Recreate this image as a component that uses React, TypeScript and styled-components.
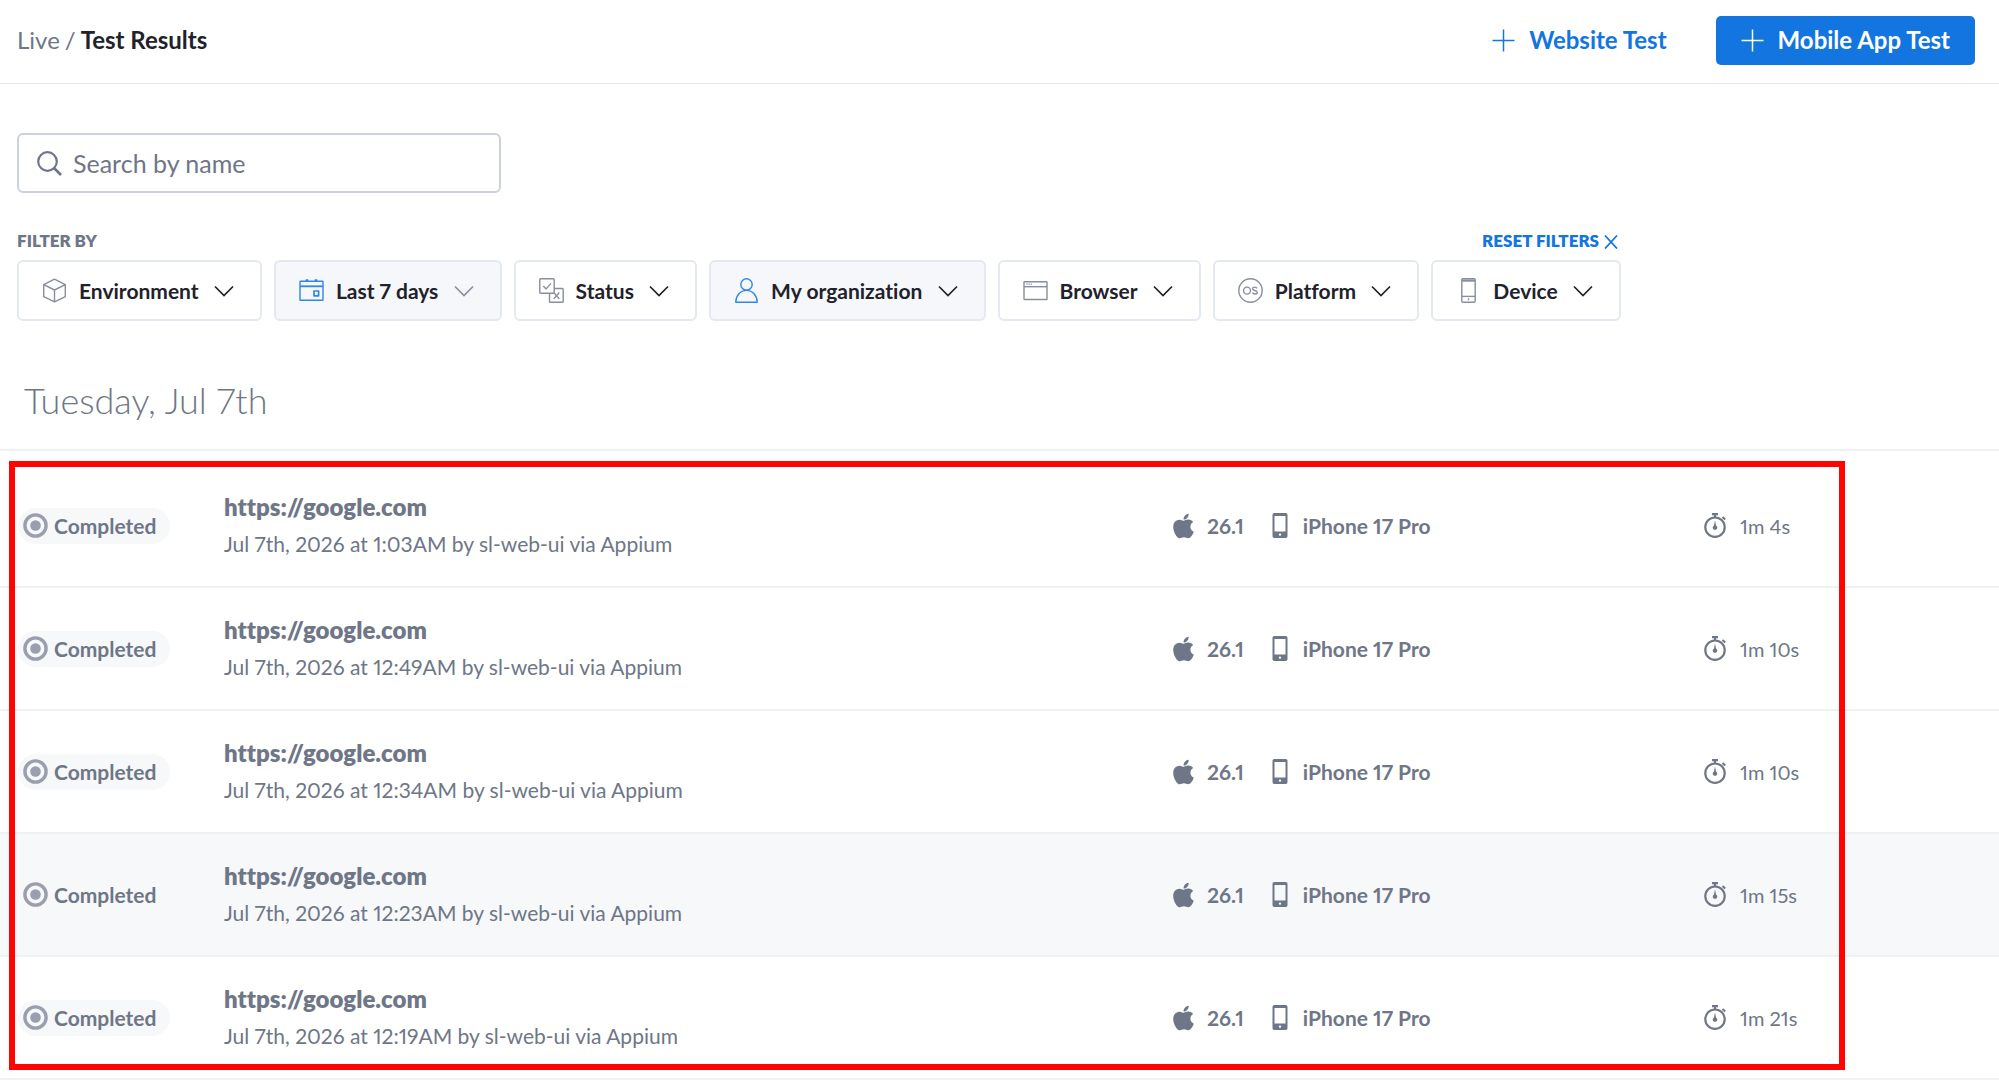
import React from "react";
import styled, { createGlobalStyle } from "styled-components";
import { FaApple } from "react-icons/fa";

const ink = "#1f222b";
const slate = "#6e7687";
const blue = "#1275e0";
const line = "#e4e8f1";

const GlobalStyle = createGlobalStyle`
  *, *::before, *::after { box-sizing: border-box; }
  body {
    margin: 0;
    background: #fff;
    color: ${slate};
    font-family: Lato, "Open Sans", sans-serif;
    font-size: 21px;
    font-variant-ligatures: none;
    font-variant-numeric: proportional-nums;
    line-height: 28px;
  }
  button, input { font: inherit; font-variant-ligatures: none; }
  a { color: inherit; text-decoration: none; }
  svg { display: block; flex: none; }
`;

const Header = styled.header`
  display: flex;
  align-items: center;
  justify-content: space-between;
  height: 84px;
  padding: 0 24px 3px 17px;
  border-bottom: 1px solid ${line};
`;

const Breadcrumb = styled.nav`
  display: flex;
  gap: 5px;
  font-size: 24px;
  line-height: 32px;
`;

const Current = styled.h1`
  margin: 0;
  color: ${ink};
  font-size: 24px;
  font-weight: 700;
  line-height: 32px;
`;

const Actions = styled.div`
  display: flex;
  gap: 24px;
`;

const ActionButton = styled.button<{ $primary?: boolean }>`
  display: flex;
  align-items: center;
  gap: 14px;
  height: 49px;
  padding: 0 25px;
  border: 0;
  border-radius: 5px;
  background: ${(p) => (p.$primary ? blue : "transparent")};
  color: ${(p) => (p.$primary ? "#fff" : blue)};
  font-size: 24px;
  font-weight: 700;
  line-height: 32px;
`;

const Toolbar = styled.section`
  padding: 49px 17px 0;
`;

const SearchBox = styled.label`
  display: flex;
  align-items: center;
  gap: 11px;
  width: 484px;
  max-width: 100%;
  height: 60px;
  padding: 0 18px;
  border: 2px solid #cbd1de;
  border-radius: 6px;
`;

const SearchInput = styled.input`
  flex: 1;
  min-width: 0;
  padding: 0;
  border: 0;
  outline: 0;
  background: none;
  color: ${ink};
  font-size: 25px;
  line-height: 32px;
  &::placeholder { color: ${slate}; opacity: 1; }
`;

const Filters = styled.div`
  max-width: 1604px;
  margin-top: 36px;
`;

const FiltersHead = styled.div`
  display: flex;
  align-items: center;
  justify-content: space-between;
  height: 24px;
  margin-bottom: 7px;
  font-size: 17px;
  font-weight: 800;
  line-height: 24px;
`;

const ResetButton = styled.button`
  display: flex;
  align-items: center;
  gap: 5px;
  padding: 0 3px 0 0;
  border: 0;
  background: none;
  color: ${blue};
  font-weight: 800;
`;

const FilterRow = styled.div`
  display: flex;
  gap: 12px;
`;

const FilterButton = styled.button<{ $active?: boolean }>`
  display: flex;
  flex: 1 1 auto;
  align-items: center;
  gap: 12px;
  height: 61px;
  padding: 0 26px 0 23px;
  border: 2px solid ${line};
  border-radius: 6px;
  background: ${(p) => (p.$active ? "#f6f7fa" : "#fff")};
  color: ${ink};
  font-weight: 700;
  white-space: nowrap;
  & > svg:first-child { color: ${(p) => (p.$active ? "#2d86ee" : "#878e9e")}; }
  & > svg:last-child { margin-left: auto; }
`;

const DayHeading = styled.h2`
  margin: 0;
  padding: 54px 24px 24px;
  color: ${slate};
  font-size: 36px;
  font-weight: 300;
  line-height: 50px;
`;

const Results = styled.div`
  position: relative;
  padding-top: 14px;
  border-top: 2px solid #f0f1f3;
`;

const Highlight = styled.div`
  position: absolute;
  top: 10px;
  bottom: 10px;
  left: 9px;
  right: 154px;
  border: 6px solid #ff0400;
  pointer-events: none;
`;

const RowList = styled.ul`
  margin: 0;
  padding: 0;
  list-style: none;
`;

const Row = styled.li<{ $hovered?: boolean }>`
  display: grid;
  grid-template-columns: 206px 949fr 531fr 295fr;
  align-items: center;
  height: 123px;
  padding-left: 18px;
  border-bottom: 2px solid #f0f1f3;
  background: ${(p) => (p.$hovered ? "#f7f8fa" : "transparent")};
`;

const StatusPill = styled.span`
  display: flex;
  align-items: center;
  justify-self: start;
  gap: 6px;
  height: 36px;
  padding: 0 14px 0 5px;
  border-radius: 18px;
  background: #f7f8fa;
  font-weight: 700;
`;

const TestInfo = styled.div`
  padding-bottom: 2px;
`;

const TestName = styled.a`
  display: block;
  margin-bottom: 7px;
  font-size: 24px;
  font-weight: 800;
  line-height: 32px;
`;

const TestMeta = styled.p`
  margin: 0;
`;

const Specs = styled.div`
  display: flex;
  align-items: center;
  gap: 26px;
  font-weight: 700;
`;

const Spec = styled.span`
  display: flex;
  align-items: center;
  gap: 13px;
`;

const Duration = styled(Spec)`
  font-size: 20px;
`;

const AppleIcon = styled(FaApple)`
  width: 21px;
  height: 28px;
`;

const PlusIcon = () => (
  <svg width="23" height="23" viewBox="0 0 23 23" fill="none" stroke="currentColor" strokeWidth="1.5" aria-hidden>
    <path d="M11.5 0.5v22M0.5 11.5h22" />
  </svg>
);

const SearchIcon = () => (
  <svg width="25" height="25" viewBox="0 0 25 25" fill="none" stroke={slate} strokeWidth="2.2" aria-hidden>
    <circle cx="10.5" cy="10.5" r="9.3" />
    <path d="M17 17l7 7" strokeWidth="2.6" />
  </svg>
);

const CloseIcon = () => (
  <svg width="14" height="16" viewBox="0 0 14 16" fill="none" stroke="currentColor" strokeWidth="1.8" aria-hidden>
    <path d="M1 2.5l12 13M13 2.5l-12 13" />
  </svg>
);

const ChevronIcon = ({ muted }: { muted?: boolean }) => (
  <svg width="20" height="12" viewBox="0 0 20 12" fill="none" stroke={muted ? "#878e9e" : ink} strokeWidth="1.7" aria-hidden>
    <path d="M1 1.500l9 9 9-9" />
  </svg>
);

const FilterIcon = ({ children }: { children: React.ReactNode }) => (
  <svg width="25" height="25" viewBox="0 0 25 25" fill="none" stroke="currentColor" strokeWidth="1.4" strokeLinejoin="round" aria-hidden>
    {children}
  </svg>
);

const icons = {
  cube: (
    <FilterIcon>
      <path d="M12.5 1.2l10.8 5.4v12l-10.8 5.2-10.8-5.2v-12zM1.7 6.6l10.8 5.4 10.8-5.4M12.5 12v11.8" />
    </FilterIcon>
  ),
  calendar: (
    <FilterIcon>
      <rect x="1" y="3.3" width="23" height="19" rx="0.5" />
      <path d="M1 8.3h23" strokeWidth="1.8" />
      <path d="M8 1.2v2.4M17 1.2v2.4" strokeWidth="2.6" />
      <rect x="15" y="13" width="4.6" height="4.8" strokeWidth="1.7" />
    </FilterIcon>
  ),
  checks: (
    <FilterIcon>
      <rect x="0.8" y="0.8" width="14.4" height="14.4" rx="0.8" />
      <path d="M15.2 10.5h8.2a.8.8 0 0 1 .8.8v12.1a.8.8 0 0 1-.8.8H11.3a.8.8 0 0 1-.8-.8v-8.2" />
      <path d="M4.3 8.1l2.8 2.8 4.9-5.5M14.7 14.5l5.6 6.4M20.3 14.5l-5.6 6.4" />
    </FilterIcon>
  ),
  person: (
    <FilterIcon>
      <circle cx="12.5" cy="6.5" r="5.7" />
      <path d="M1.8 24.2c0-6.6 4.8-11.8 10.7-11.8s10.7 5.2 10.7 11.8z" />
    </FilterIcon>
  ),
  window: (
    <FilterIcon>
      <rect x="1" y="3.7" width="23" height="17.8" rx="0.5" />
      <path d="M1 8.700h23" />
      <path d="M3.400 6.200h6" strokeWidth="1.300" strokeDasharray="1.300 0.800" />
    </FilterIcon>
  ),
  os: (
    <FilterIcon>
      <circle cx="12.5" cy="12.5" r="11.7" />
      <circle cx="9" cy="12.6" r="3.5" />
      <path d="M19 10.400c-.5-.9-1.300-1.300-2.300-1.300-1.200 0-2.100.6-2.100 1.600 0 2.300 4.600 1.200 4.600 3.500 0 1-1 1.800-2.200 1.800-1.200 0-2.100-.5-2.600-1.400" />
    </FilterIcon>
  ),
  phone: (
    <FilterIcon>
      <rect x="5.8" y="0.8" width="13.4" height="23.4" rx="1" />
      <path d="M5.8 2.6h13.4" strokeWidth="2.2" />
      <path d="M5.8 18.4h13.4" />
      <path d="M12.5 20.3v2" />
    </FilterIcon>
  ),
};

const CompletedIcon = () => (
  <svg width="25" height="25" viewBox="0 0 25 25" fill="none" aria-hidden>
    <circle cx="12.5" cy="12.5" r="10.6" stroke="#999fae" strokeWidth="3.4" />
    <circle cx="12.5" cy="12.5" r="5.3" fill="#999fae" />
  </svg>
);

const PhoneIcon = () => (
  <svg width="20" height="25" viewBox="0 0 20 25" aria-hidden>
    <path
      fill={slate}
      fillRule="evenodd"
      d="M4.2 0h11.6A1.7 1.7 0 0 1 17.5 1.7v21.6a1.7 1.7 0 0 1-1.7 1.7H4.2a1.7 1.7 0 0 1-1.7-1.7V1.7A1.7 1.7 0 0 1 4.2 0zM4.5 3v15.5h11V3zM10 20.4a1.2 1.2 0 1 0 0 2.4 1.2 1.2 0 0 0 0-2.4z"
    />
  </svg>
);

const StopwatchIcon = () => (
  <svg width="23" height="25" viewBox="0 0 23 25" fill="none" stroke={slate} strokeWidth="2.2" aria-hidden>
    <circle cx="11" cy="14.2" r="9.7" />
    <path d="M8 1.1h6M11 1.1v3.2" />
    <path d="M18.5 3.9l2.7 2.5" strokeWidth="2" />
    <path d="M11 7.2l1 5.2a2.3 2.3 0 1 1-2 0z" fill={slate} stroke="none" />
  </svg>
);

type Filter = { label: string; icon: React.ReactNode; active?: boolean; muted?: boolean };

const filters: Filter[] = [
  { label: "Environment", icon: icons.cube },
  { label: "Last 7 days", icon: icons.calendar, active: true, muted: true },
  { label: "Status", icon: icons.checks },
  { label: "My organization", icon: icons.person, active: true },
  { label: "Browser", icon: icons.window },
  { label: "Platform", icon: icons.os },
  { label: "Device", icon: icons.phone },
];

const tests = [
  { time: "1:03AM", duration: "1m 4s" },
  { time: "12:49AM", duration: "1m 10s" },
  { time: "12:34AM", duration: "1m 10s" },
  { time: "12:23AM", duration: "1m 15s", hovered: true },
  { time: "12:19AM", duration: "1m 21s" },
];

export default function App() {
  return (
    <>
      <GlobalStyle />
      <Header>
        <Breadcrumb aria-label="Breadcrumb">
          <a href="#live">Live</a>
          <span>/</span>
          <Current>Test Results</Current>
        </Breadcrumb>
        <Actions>
          <ActionButton type="button">
            <PlusIcon />
            Website Test
          </ActionButton>
          <ActionButton type="button" $primary>
            <PlusIcon />
            Mobile App Test
          </ActionButton>
        </Actions>
      </Header>
      <main>
        <Toolbar>
          <SearchBox>
            <SearchIcon />
            <SearchInput type="text" placeholder="Search by name" aria-label="Search by name" />
          </SearchBox>
          <Filters>
            <FiltersHead>
              <span>FILTER BY</span>
              <ResetButton type="button">
                RESET FILTERS
                <CloseIcon />
              </ResetButton>
            </FiltersHead>
            <FilterRow>
              {filters.map((f) => (
                <FilterButton key={f.label} type="button" aria-haspopup="listbox" $active={f.active}>
                  {f.icon}
                  {f.label}
                  <ChevronIcon muted={f.muted} />
                </FilterButton>
              ))}
            </FilterRow>
          </Filters>
        </Toolbar>
        <DayHeading>Tuesday, Jul 7th</DayHeading>
        <Results>
          <RowList>
            {tests.map((t) => (
              <Row key={t.time} $hovered={t.hovered}>
                <StatusPill>
                  <CompletedIcon />
                  Completed
                </StatusPill>
                <TestInfo>
                  <TestName href="#test">https://google.com</TestName>
                  <TestMeta>Jul 7th, 2026 at {t.time} by sl-web-ui via Appium</TestMeta>
                </TestInfo>
                <Specs>
                  <Spec>
                    <AppleIcon aria-hidden />
                    26.1
                  </Spec>
                  <Spec>
                    <PhoneIcon />
                    iPhone 17 Pro
                  </Spec>
                </Specs>
                <Duration>
                  <StopwatchIcon />
                  {t.duration}
                </Duration>
              </Row>
            ))}
          </RowList>
          <Highlight />
        </Results>
      </main>
    </>
  );
}
